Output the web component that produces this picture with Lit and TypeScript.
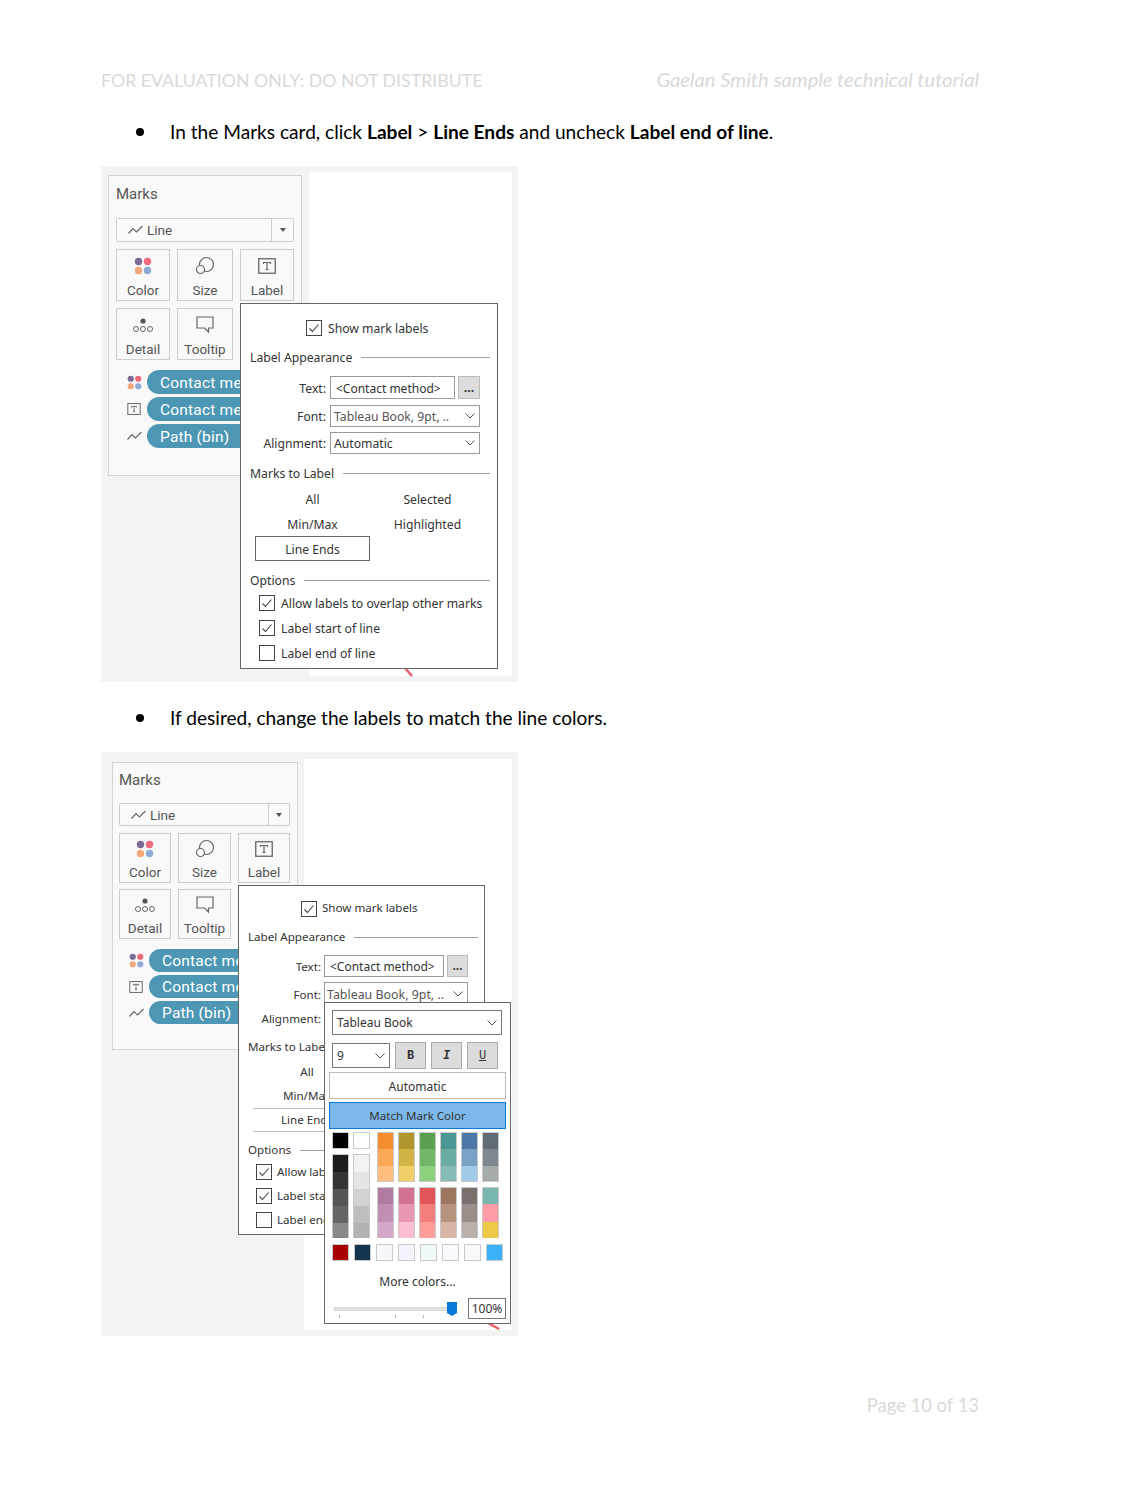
import { LitElement, html, css, svg } from "lit";
import { customElement } from "lit/decorators.js";

const strip = (cols: string[], hs: number[] = [], cut = false) => html`<div class="strip ${cut ? "cut" : ""}">${cols.map((c, i) => html`<i style="background:${c};height:${hs[i] ?? 17}px"></i>`)}</div>`;

const TOP = [
  ["#f58e2e", "#fba857", "#ffbe7d"], ["#b0962c", "#d1b346", "#f0ce68"], ["#59a14f", "#70b865", "#8cd17d"],
  ["#499894", "#6aaba2", "#86bcb6"], ["#4e79a7", "#7aa2c7", "#a0cbe8"], ["#616b75", "#7f878e", "#a5aaaa"],
];
const BOT = [
  ["#b07aa1", "#c28eb3", "#d4a6c8"], ["#d37295", "#e797b1", "#fabfd2"], ["#e15759", "#f47e7b", "#ff9d9a"],
  ["#9d7660", "#b8947f", "#d7b5a6"], ["#79706e", "#9a8e8b", "#bab0ac"], ["#7ab7ae", "#ff9da7", "#edc948"],
];
const BOTTOM = ["#a80000", "#13344c", "#f8f8fc", "#f4f5fc", "#f2f9fb", "#fafafe", "#f9f9fb", "#3bb1fb"];

const dots = (s: number) => svg`<svg width="${s}" height="${s}" viewBox="0 0 16 16"><circle cx="4" cy="4" r="3.3" fill="#7d6b95"/><circle cx="12" cy="4" r="3.3" fill="#ee6a7c"/><circle cx="4" cy="12" r="3.3" fill="#f3a777"/><circle cx="12" cy="12" r="3.3" fill="#8fabd3"/></svg>`;
const sizeIcon = svg`<svg width="20" height="20" viewBox="0 0 20 20" fill="none" stroke="#666" stroke-width="1.2"><circle cx="11.5" cy="8.5" r="7"/><circle cx="5.5" cy="13.5" r="4" fill="#f9f9f9"/></svg>`;
const labelIcon = (w: number, h: number) => svg`<svg width="${w}" height="${h}" viewBox="0 0 18 16" fill="none"><rect x=".75" y=".75" width="16.5" height="14.5" stroke="#666" stroke-width="1.3"/><path d="M5.5 6V4.5h7V6M9 4.5v7M7.5 11.5h3" stroke="#666" stroke-width="1.2"/></svg>`;
const detailIcon = svg`<svg width="22" height="16" viewBox="0 0 22 16" fill="none" stroke="#666" stroke-width="1"><circle cx="11" cy="4" r="2.6" fill="#555" stroke="none"/><circle cx="4" cy="12" r="2.5"/><circle cx="11" cy="12" r="2.5"/><circle cx="18" cy="12" r="2.5"/></svg>`;
const tipIcon = svg`<svg width="18" height="18" viewBox="0 0 18 18" fill="none" stroke="#666" stroke-width="1.2"><path d="M1 1h16v11h-4.5v4l-4-4H1z"/></svg>`;
const lineIcon = (c = "#666") => svg`<svg width="15" height="10" viewBox="0 0 15 10" fill="none" stroke="${c}" stroke-width="1.2"><path d="M.5 8.5 5 3.5l3.5 3.5L14.5 1"/></svg>`;
const chev = svg`<svg class="chev" width="10" height="6" viewBox="0 0 10 6" fill="none" stroke="#555" stroke-width="1"><path d="M.5.5 5 5 9.5.5"/></svg>`;
const check = svg`<svg width="14" height="14" viewBox="0 0 14 14" fill="none" stroke="#444" stroke-width="1.1"><path d="M2.5 7.5 5.5 10.5 11.5 3.5"/></svg>`;

const cb = (on: boolean) => html`<span class="cb">${on ? check : ""}</span>`;
const head = (t: string) => html`<div class="head"><span>${t}</span><b></b></div>`;
const opt = (t: string, on: boolean) => html`<div class="opt">${cb(on)}<span>${t}</span></div>`;

const marksPanel = () => html`
  <div class="panel">
    <div class="title">Marks</div>
    <div class="dd"><span class="ddl">${lineIcon()}<span>Line</span></span><span class="dda"><em></em></span></div>
    <div class="btns">
      <div class="btn"><span class="ic">${dots(18)}</span><span>Color</span></div>
      <div class="btn"><span class="ic">${sizeIcon}</span><span>Size</span></div>
      <div class="btn"><span class="ic">${labelIcon(18, 16)}</span><span>Label</span></div>
      <div class="btn"><span class="ic">${detailIcon}</span><span>Detail</span></div>
      <div class="btn"><span class="ic">${tipIcon}</span><span>Tooltip</span></div>
    </div>
    <div class="pills">
      <div class="pr"><span class="pi">${dots(15)}</span><span class="pill">Contact method</span></div>
      <div class="pr"><span class="pi">${labelIcon(14, 12)}</span><span class="pill">Contact method</span></div>
      <div class="pr"><span class="pi">${lineIcon()}</span><span class="pill">Path (bin)</span></div>
    </div>
  </div>`;

const labelForm = (second: boolean) => html`
  <div class="show">${cb(true)}<span>Show mark labels</span></div>
  ${head("Label Appearance")}
  <div class="fr fr1"><label>Text:</label><span class="box tx">&lt;Contact method&gt;</span><span class="dots">...</span></div>
  <div class="fr fr2"><label>Font:</label><span class="box sel"><span class="fnt">Tableau Book, 9pt, ..</span>${chev}</span></div>
  <div class="fr fr3"><label>Alignment:</label><span class="box sel"><span>Automatic</span>${chev}</span></div>
  ${head("Marks to Label")}
  <div class="mtl">
    <span>All</span><span>Selected</span>
    <span>Min/Max</span><span>Highlighted</span>
    <span class="${second ? "le2" : "le"}">Line Ends</span>
  </div>
  ${head("Options")}
  ${opt("Allow labels to overlap other marks", true)}
  ${opt("Label start of line", true)}
  ${opt("Label end of line", false)}`;

@customElement("app-root")
export class AppRoot extends LitElement {
  static styles = css`
    :host { display: block; width: 1148px; height: 1485px; background: #fff; font-family: Lato, "Liberation Sans", sans-serif; color: #000; overflow: hidden; }
    .page { display: flex; flex-direction: column; padding: 68px 169px 0 101px; }
    .hdr { display: flex; justify-content: space-between; height: 24px; line-height: 24px; font-size: 17.75px; font-weight: 400; color: #d9d9d9; }
    .hdr i { font-size: 20.2px; line-height: 23px; }
    .bul { display: flex; align-items: center; height: 26px; font-size: 19.1px; padding-left: 35px; }
    .bul::before { content: ""; width: 8px; height: 8px; border-radius: 50%; background: #000; margin-right: 26px; }
    .bul b { font-weight: 700; }
    .b1 { margin-top: 27px; padding-bottom: 1px; height: 25px; }
    .b2 { margin-top: 23px; height: 25px; padding-bottom: 1px; }
    .fig { position: relative; width: 417px; background: #f3f3f3; display: flex; align-items: flex-start; margin-top: 21px; font-family: "Open Sans", sans-serif; }
    .foot { text-align: right; font-size: 18.4px; color: #d9d9d9; margin-top: 57px; line-height: 24px; }

    .panel { background: #f9f9f9; border: 1px solid #d4d4d4; box-sizing: border-box; overflow: hidden; color: #555; font-family: Roboto, sans-serif; }
    .view { background: #fff; position: relative; }
    .title { font-size: 15px; color: #555; line-height: 18px; }
    .dd { display: flex; border: 1px solid #ccc; border-radius: 2px; box-sizing: border-box; font-size: 13.5px; background: #fafafa; }
    .ddl { flex: 1; display: flex; align-items: center; gap: 4px; padding-left: 11px; }
    .dda { width: 21px; border-left: 1px solid #ccc; display: flex; align-items: center; justify-content: center; }
    .dda em { border: 3.5px solid transparent; border-top: 4px solid #555; border-bottom: 0; }
    .btns { display: grid; column-gap: 7px; }
    .btn { border: 1px solid #ccc; box-sizing: border-box; display: flex; flex-direction: column; align-items: center; font-size: 13.5px; }
    .ic { height: 32px; display: flex; align-items: center; justify-content: center; }
    .pills { display: flex; flex-direction: column; gap: 3px; margin-top: 10px; }
    .pr { display: flex; align-items: stretch; }
    .pi { width: 31px; padding-left: 11px; box-sizing: border-box; display: flex; align-items: center; flex: none; }
    .pill { background: #4d97b5; color: #fff; border-radius: 12px 0 0 12px; font-size: 15.5px; padding-left: 13px; width: 150px; flex: none; box-sizing: border-box; white-space: nowrap; letter-spacing: .2px; overflow: hidden; display: flex; align-items: center; }

    .f1 { height: 516px; }
    .f1 .panel { margin: 9px 0 0 7px; width: 194px; height: 301px; padding: 9px 0 0 7px; }
    .f1 .view { margin: 6px 0 0 7px; width: 203px; height: 504px; }
    .f1 .dd { width: 178px; height: 24px; margin-top: 15px; }
    .f1 .btns { grid-template-columns: 54px 56px 54px; grid-auto-rows: 52px; row-gap: 7px; margin-top: 7px; width: 178px; }
    .f1 .pr { height: 24px; }
    .f1 .pill { padding-top: 2px; }
    .f2 { height: 584px; margin-top: 21px; }
    .f2 .panel { margin: 10px 0 0 11px; width: 186px; height: 288px; padding: 8px 0 0 6px; }
    .f2 .view { margin: 7px 0 0 6px; width: 208px; height: 571px; }
    .f2 .dd { width: 171px; height: 23px; margin-top: 14px; }
    .f2 .dda { width: 20px; }
    .f2 .btns { grid-template-columns: 52px 53px 52px; grid-auto-rows: 50px; row-gap: 6px; margin-top: 7px; width: 171px; }
    .f2 .ic { height: 30px; }
    .f2 .pr { height: 23px; }
    .f2 .pi { padding-left: 10px; width: 30px; }

    .red { position: absolute; }
    .pop { position: absolute; background: #fff; border: 1px solid #666; box-sizing: border-box; color: #333; font-family: "Noto Sans", sans-serif; font-size: 12.2px; line-height: 16px; white-space: nowrap; overflow: hidden; }
    .cb { width: 16px; height: 16px; border: 1px solid #444; box-sizing: border-box; display: inline-flex; align-items: center; justify-content: center; flex: none; background: #fff; }
    .show { display: flex; align-items: center; gap: 6px; }
    .head { display: flex; align-items: center; gap: 9px; height: 18px; }
    .head b { flex: 1; height: 1px; background: #a0a0a0; }
    .fr { display: flex; align-items: stretch; }
    .fr label { text-align: right; align-self: center; flex: none; }
    .box { border: 1px solid #999; box-sizing: border-box; display: flex; align-items: center; }
    .tx { padding-left: 5px; font-size: 12px; }
    .dots { background: #dcdcdc; border: 1px solid #bbb; box-sizing: border-box; display: flex; align-items: center; justify-content: center; font-weight: 700; }
    .sel { padding: 0 4px 0 3px; justify-content: space-between; }
    .fnt { color: #555; }
    .mtl { display: grid; text-align: center; align-items: center; }
    .mtl .le { border: 1px solid #666; height: 25px; box-sizing: border-box; line-height: 25px; }
    .mtl .le2 { border-top: 1px solid #bbb; border-bottom: 1px solid #bbb; height: 24px; line-height: 22px; box-sizing: border-box; }
    .opt { display: flex; align-items: center; gap: 6px; }

    .p1 { left: 139px; top: 137px; width: 258px; height: 366px; padding: 16px 7px 0 9px; }
    .p1 .show { padding-left: 56px; height: 16px; }
    .p1 .show > span:last-child, .p1 .opt > span:last-child, .p1 .head > span, .p1 label, .p1 .tx, .p1 .sel > span, .p1 .mtl > span:nth-child(3), .p1 .mtl > span:nth-child(4) { padding-top: 2px; }
    .p1 .head { margin-top: 12px; }
    .p1 .fr label { width: 76px; margin-right: 4px; }
    .p1 .fr1 { margin-top: 10px; height: 23px; }
    .p1 .tx { width: 125px; }
    .p1 .dots { width: 22px; margin-left: 3px; }
    .p1 .fr2 { margin-top: 6px; height: 22px; }
    .p1 .fr3 { margin-top: 5px; height: 22px; }
    .p1 .sel { width: 150px; }
    .p1 .fr3 + .head { margin-top: 10px; }
    .p1 .mtl { grid-template-columns: 115px 115px; grid-template-rows: 25px 24px 25px; margin: 5px 0 0 5px; }
    .p1 .mtl + .head { margin-top: 10px; }
    .p1 .opt { padding-left: 9px; height: 25px; }
    .p1 .mtl + .head + .opt { margin-top: 1px; }

    .p2 { left: 137px; top: 133px; width: 247px; height: 350px; padding: 15px 6px 0 9px; font-size: 11.6px; }
    .p2 .show { padding-left: 53px; height: 16px; gap: 5px; }
    .p2 .show > span:last-child, .p2 .fr3 label { padding-bottom: 2px; }
    .p2 .cb { width: 16px; height: 16px; }
    .p2 .show + .head { margin-top: 11px; }
    .p2 .fr label { width: 73px; margin-right: 3px; }
    .p2 .fr1 label, .p2 .fr1 .tx, .p2 .fr2 label, .p2 .fr2 .sel > span { padding-top: 2px; }
    .p2 .fnt { font-size: 12.4px; }
    .p2 .fr1 { margin-top: 9px; height: 22px; }
    .p2 .tx { width: 120px; }
    .p2 .dots { width: 21px; margin-left: 3px; }
    .p2 .fr2 { margin-top: 5px; height: 24px; }
    .p2 .fr3 { margin-top: 1px; height: 26px; }
    .p2 .sel { width: 144px; padding-left: 2px; }
    .p2 .fr3 + .head { margin-top: 5px; }
    .p2 .mtl { grid-template-columns: 108px 108px; grid-template-rows: 24px 24px 24px; margin: 4px 0 0 5px; }
    .p2 .mtl + .head { margin-top: 9px; }
    .p2 .opt { padding-left: 8px; height: 24px; gap: 5px; }
    .p2 .mtl + .head + .opt { margin-top: 1px; }

    .cp { left: 223px; top: 250px; width: 187px; height: 322px; padding: 7px 4px 0 4px; font-size: 12px; color: #333; }
    .cp .s1 { margin-left: 3px; width: 170px; height: 25px; border: 1px solid #777; padding: 0 4px; }
    .cp .r2 { display: flex; align-items: center; margin: 7px 0 0 3px; height: 27px; }
    .cp .s2 { width: 58px; height: 25px; border: 1px solid #777; padding: 0 4px; margin-right: 5px; }
    .tb { width: 31px; height: 27px; border: 1px solid #aaa; background: #dcdcdc; box-sizing: border-box; display: flex; align-items: center; justify-content: center; margin-right: 5px; font-size: 12px; font-family: "Liberation Mono", monospace; }
    .auto { height: 27px; border: 1px solid #bbb; box-sizing: border-box; text-align: center; line-height: 27px; margin-top: 3px; }
    .match { height: 27px; border: 1px solid #0a78d6; background: #7cb8ea; box-sizing: border-box; text-align: center; line-height: 25px; margin-top: 3px; font-size: 11.5px; }
    .pal { display: flex; margin: 3px 0 0 3px; gap: 7px; }
    .pl { display: grid; grid-template-columns: 17px 17px; column-gap: 4px; row-gap: 5px; align-content: start; }
    .sw { height: 17px; width: 17px; border: 1px solid #c9c9c9; box-sizing: border-box; display: block; }
    .pg { display: grid; grid-template-columns: repeat(6, 17px); column-gap: 4px; row-gap: 5px; }
    .strip { border: 1px solid #c9c9c9; box-sizing: border-box; display: flex; flex-direction: column; width: 17px; }
    .strip i { display: block; flex: none; }
    .strip.cut { border-bottom: 0; }
    .pb { display: flex; gap: 5px; margin: 6px 0 0 3px; }
    .more { text-align: center; margin-top: 11px; height: 20px; line-height: 20px; }
    .sl { position: relative; height: 28px; margin-top: 5px; }
    .track { position: absolute; left: 5px; top: 10px; width: 119px; height: 4px; background: #e2e2e2; border: 1px solid #d5d5d5; box-sizing: border-box; }
    .thumb { position: absolute; left: 118px; top: 5px; }
    .tick { position: absolute; top: 18px; width: 1px; height: 3px; background: #bbb; }
    .pct { position: absolute; right: 0; top: 1px; width: 38px; height: 21px; border: 1px solid #777; box-sizing: border-box; text-align: center; line-height: 19px; }
  `;

  render() {
    return html`<div class="page">
      <div class="hdr"><span>FOR EVALUATION ONLY: DO NOT DISTRIBUTE</span><i>Gaelan Smith sample technical tutorial</i></div>
      <div class="bul b1"><span>In the Marks card, click <b>Label</b> &gt; <b>Line Ends</b> and uncheck <b>Label end of line</b>.</span></div>
      <div class="fig f1">
        ${marksPanel()}
        <div class="view"></div>
        <svg class="red" style="left:303px;top:502px" width="12" height="9"><path d="M1 0 8 8" stroke="#e8616a" stroke-width="2.5"/></svg>
        <div class="pop p1">${labelForm(false)}</div>
      </div>
      <div class="bul b2"><span>If desired, change the labels to match the line colors.</span></div>
      <div class="fig f2">
        ${marksPanel()}
        <div class="view"></div>
        <svg class="red" style="left:386px;top:571px" width="14" height="7"><path d="M1 0 12 6" stroke="#e8616a" stroke-width="2.5"/></svg>
        <div class="pop p2">${labelForm(true)}</div>
        <div class="pop cp">
          <div class="box sel s1"><span>Tableau Book</span>${chev}</div>
          <div class="r2">
            <div class="box sel s2"><span>9</span>${chev}</div>
            <div class="tb"><b>B</b></div><div class="tb"><b><i>I</i></b></div><div class="tb"><u>U</u></div>
          </div>
          <div class="auto">Automatic</div>
          <div class="match">Match Mark Color</div>
          <div class="pal">
            <div class="pl">
              <span class="sw" style="background:#000"></span><span class="sw" style="background:#fff"></span>
              ${strip(["#1c1c1c", "#333", "#555", "#656565", "#8a8a8a"], [17, 17, 17, 17, 15], true)}
              ${strip(["#f2f2f2", "#e5e5e5", "#d2d2d2", "#bebebe", "#b2b2b2"], [17, 17, 17, 17, 15], true)}
            </div>
            <div class="pg">
              ${TOP.map((c) => strip(c, [16, 17, 15]))}
              ${BOT.map((c) => strip(c, [16, 18, 16], true))}
            </div>
          </div>
          <div class="pb">${BOTTOM.map((c) => html`<span class="sw" style="background:${c}"></span>`)}</div>
          <div class="more">More colors...</div>
          <div class="sl">
            <div class="track"></div>
            <span class="tick" style="left:10px"></span><span class="tick" style="left:66px"></span><span class="tick" style="left:94px"></span>
            <svg class="thumb" width="10" height="14"><path d="M0 0h10v11l-5 3-5-3z" fill="#0a78d6"/></svg>
            <div class="pct">100%</div>
          </div>
        </div>
      </div>
      <div class="foot">Page 10 of 13</div>
    </div>`;
  }
}
